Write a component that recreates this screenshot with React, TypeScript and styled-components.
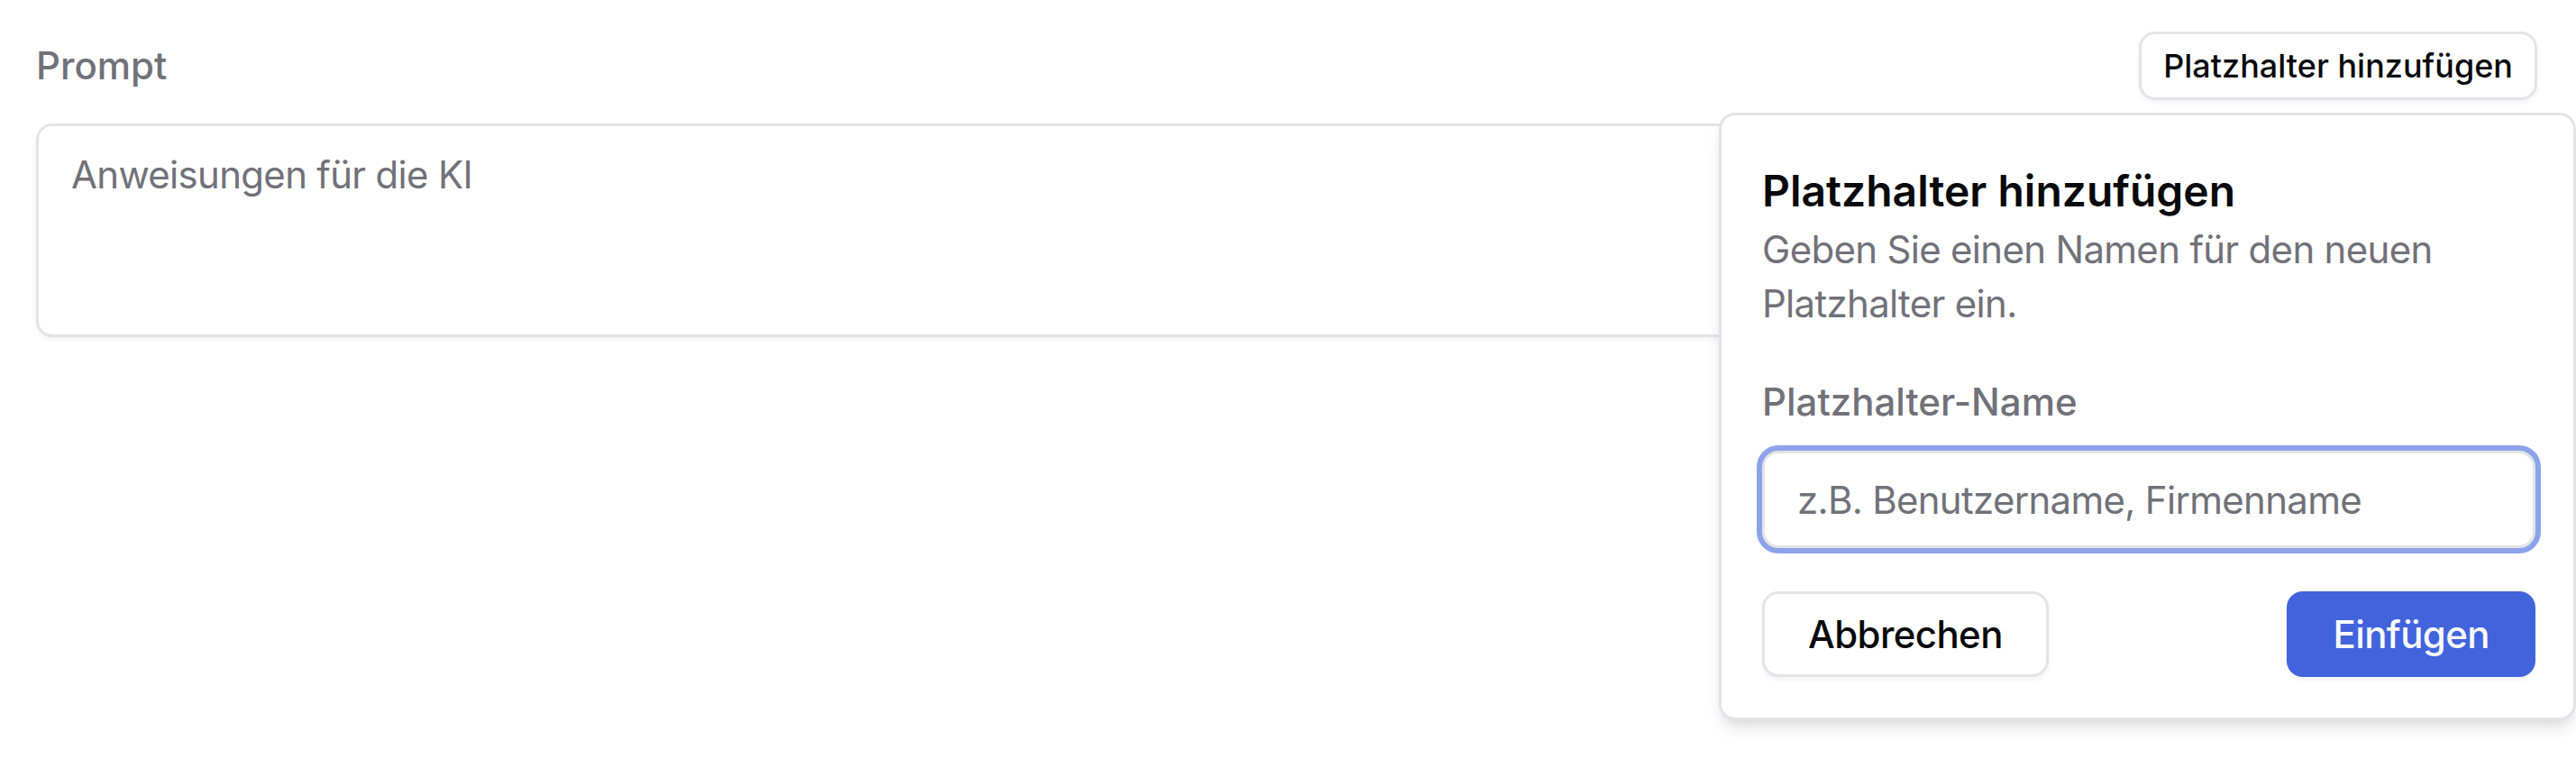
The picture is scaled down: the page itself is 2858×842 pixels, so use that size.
import React from "react";
import styled, { createGlobalStyle, css } from "styled-components";

const GlobalStyle = createGlobalStyle`
  * {
    box-sizing: border-box;
  }

  html,
  body,
  #root {
    min-height: 100%;
  }

  body {
    margin: 0;
    background: #ffffff;
    font-family: Inter, "Noto Sans", "Liberation Sans", sans-serif;
    color: #09090b;
  }
`;

const Page = styled.main`
  display: flex;
  flex-direction: column;
  gap: 26px;
  min-height: 842px;
  padding: 35px 43px 0 40px;
`;

const HeaderRow = styled.div`
  display: flex;
  align-items: center;
  justify-content: space-between;
`;

const FieldLabel = styled.label`
  font-size: 42px;
  line-height: 60px;
  font-weight: 500;
  color: #71717a;
`;

const Anchor = styled.div`
  position: relative;
`;

const Button = styled.button<{ $variant: "outline" | "primary"; $size: "sm" | "md" }>`
  display: inline-flex;
  align-items: center;
  justify-content: center;
  border: 3px solid transparent;
  border-radius: 18px;
  font-family: inherit;
  font-weight: 500;
  cursor: pointer;
  white-space: nowrap;

  ${({ $size }) =>
    $size === "sm"
      ? css`
          height: 76px;
          padding: 0 24px;
          font-size: 36px;
        `
      : css`
          height: 95px;
          padding: 0 48px;
          font-size: 42px;
          letter-spacing: -0.6px;
        `}

  ${({ $variant }) =>
    $variant === "outline"
      ? css`
          background: #ffffff;
          border-color: #e4e4e7;
          color: #09090b;
          box-shadow: 0 3px 6px rgba(0, 0, 0, 0.05);
        `
      : css`
          background: #4164dd;
          color: #f8fafc;
          box-shadow: 0 3px 6px rgba(0, 0, 0, 0.05);
        `}
`;

const PromptArea = styled.textarea`
  display: block;
  width: 100%;
  height: 237px;
  padding: 24px 36px;
  border: 3px solid #e4e4e7;
  border-radius: 18px;
  background: #ffffff;
  box-shadow: 0 3px 6px rgba(0, 0, 0, 0.05);
  font-family: inherit;
  font-size: 42px;
  line-height: 60px;
  letter-spacing: -0.7px;
  color: #09090b;
  resize: none;
  outline: none;

  &::placeholder {
    color: #71717a;
  }
`;

const Popover = styled.div`
  position: absolute;
  top: calc(100% + 14px);
  right: -43px;
  z-index: 10;
  width: 951px;
  padding: 54px 42px 45px 45px;
  background: #ffffff;
  border: 3px solid #e4e4e7;
  border-radius: 18px;
  box-shadow: 0 12px 18px -3px rgba(0, 0, 0, 0.1),
    0 6px 12px -6px rgba(0, 0, 0, 0.1);
`;

const Title = styled.h4`
  margin: 0;
  font-size: 48px;
  line-height: 60px;
  font-weight: 600;
  color: #09090b;
`;

const Description = styled.p`
  margin: 5px 0 0;
  font-size: 42px;
  line-height: 60px;
  letter-spacing: -0.7px;
  color: #71717a;
`;

const Field = styled.div`
  display: flex;
  flex-direction: column;
  gap: 24px;
  margin-top: 49px;
`;

const NameInput = styled.input`
  display: block;
  width: 100%;
  height: 108px;
  padding: 0 36px;
  border: 3px solid #e4e4e7;
  border-radius: 18px;
  box-shadow: 0 0 0 6px #8ca3ea;
  font-family: inherit;
  font-size: 42px;
  letter-spacing: -0.7px;
  color: #09090b;
  outline: none;

  &::placeholder {
    color: #71717a;
  }
`;

const Actions = styled.div`
  display: flex;
  justify-content: space-between;
  margin-top: 48px;
`;

export default function App() {
  return (
    <>
      <GlobalStyle />
      <Page>
        <HeaderRow>
          <FieldLabel htmlFor="prompt">Prompt</FieldLabel>
          <Anchor>
            <Button $variant="outline" $size="sm">
              Platzhalter hinzufügen
            </Button>
            <Popover>
              <Title>Platzhalter hinzufügen</Title>
              <Description>
                Geben Sie einen Namen für den neuen Platzhalter ein.
              </Description>
              <Field>
                <FieldLabel htmlFor="placeholder-name">Platzhalter-Name</FieldLabel>
                <NameInput
                  id="placeholder-name"
                  placeholder="z.B. Benutzername, Firmenname"
                />
              </Field>
              <Actions>
                <Button $variant="outline" $size="md">
                  Abbrechen
                </Button>
                <Button $variant="primary" $size="md">
                  Einfügen
                </Button>
              </Actions>
            </Popover>
          </Anchor>
        </HeaderRow>
        <PromptArea id="prompt" placeholder="Anweisungen für die KI" />
      </Page>
    </>
  );
}
